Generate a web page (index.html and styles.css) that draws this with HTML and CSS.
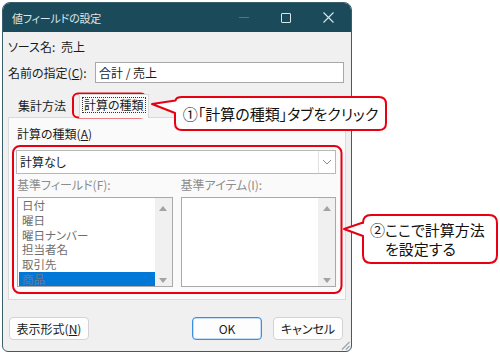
FILE: index.html
```html
<!DOCTYPE html>
<html lang="ja">
<head>
<meta charset="utf-8">
<link rel="stylesheet" href="styles.css">
</head>
<body>
<div class="stage">
  <div class="window">
    <div class="titlebar">
      <span class="title">値フィールドの設定</span>
      <span class="tb-btn tb-min"></span>
      <span class="tb-btn tb-max"><span class="maxbox"></span></span>
      <span class="tb-btn tb-close">
        <svg width="11" height="11" viewBox="0 0 11 11"><path d="M0.5 0.5L10.5 10.5M10.5 0.5L0.5 10.5" stroke="#dbe6e9" stroke-width="1.1" fill="none"/></svg>
      </span>
    </div>
    <div class="content">
      <div class="row source"><span class="srclabel">ソース名:</span>売上</div>
      <div class="row namerow">
        <span class="label">名前の指定(<u>C</u>):</span>
        <div class="input">合計 / 売上</div>
      </div>
      <div class="tabs">
        <div class="tab">集計方法</div>
        <div class="tab active"><span class="focus">計算の種類</span></div>
      </div>
      <div class="panel">
        <div class="plabel">計算の種類(<u>A</u>)</div>
        <div class="select">
          <span class="sel-text">計算なし</span>
          <span class="sel-arrow">
            <svg width="10" height="6" viewBox="0 0 10 6"><path d="M1 1L5 5L9 1" stroke="#8a8a8a" stroke-width="1" fill="none"/></svg>
          </span>
        </div>
        <div class="lists">
          <div class="col">
            <div class="plabel dis">基準フィールド(F):</div>
            <div class="listbox">
              <div class="items">
                <div class="item">日付</div>
                <div class="item">曜日</div>
                <div class="item">曜日ナンバー</div>
                <div class="item">担当者名</div>
                <div class="item">取引先</div>
                <div class="item selected">商品</div>
              </div>
              <div class="scroll"><span class="up"></span><span class="down"></span></div>
            </div>
          </div>
          <div class="col">
            <div class="plabel dis">基準アイテム(I):</div>
            <div class="listbox">
              <div class="items"></div>
              <div class="scroll"><span class="up"></span><span class="down"></span></div>
            </div>
          </div>
        </div>
      </div>
      <div class="buttons">
        <div class="btn wide">表示形式(<u>N</u>)</div>
        <div class="spacer"></div>
        <div class="btn default">OK</div>
        <div class="btn">キャンセル</div>
      </div>
    </div>
    <svg class="grip" width="9" height="9" viewBox="0 0 9 9"><path d="M8.5 1L1 8.5M8.5 5L5 8.5" stroke="#9aa4a8" stroke-width="1.2" fill="none"/></svg>
  </div>

  <svg class="annot" width="500" height="356" viewBox="0 0 500 356">
    <rect x="73" y="93.5" width="73" height="24" rx="5" ry="5" fill="none" stroke="#e60012" stroke-width="2"/>
    <rect x="13" y="146" width="328.5" height="147" rx="7" ry="7" fill="none" stroke="#e60012" stroke-width="2"/>
    <path d="M182 97 H379 Q386 97 386 104 V123 Q386 130 379 130 H182 Q175 130 175 123 V113 L152 104 L175.5 100.5 Q176 97 182 97 Z" fill="#fff" stroke="#e60012" stroke-width="2" stroke-linejoin="round"/>
    <path d="M371 215 H489 Q497 215 497 223 V255 Q497 263 489 263 H371 Q363 263 363 255 V236 L344 229 L363 222.5 V223 Q363 215 371 215 Z" fill="#fff" stroke="#e60012" stroke-width="2" stroke-linejoin="round"/>
  </svg>
  <div class="callout c1">①「計算の種類」タブをクリック</div>
  <div class="callout c2"><span class="l1">②ここで計算方法</span><span class="l2">を設定する</span></div>
</div>
</body>
</html>
```

FILE: styles.css
```css
* { box-sizing: border-box; }
html, body { margin: 0; padding: 0; background: #fff; }
body {
  font-family: "Noto Sans CJK JP", "Noto Sans", sans-serif;
  font-feature-settings: "palt";
  font-size: 12px;
  color: #1a1a1a;
}
u { text-decoration-thickness: 1px; text-underline-offset: 1px; }
.stage { position: relative; width: 500px; height: 356px; overflow: hidden; }

.window {
  position: relative;
  margin: 2px 0 0 2px;
  width: 350px;
  height: 350px;
  border: 1px solid #3a5f6b;
  border-radius: 8px 8px 6px 6px;
  background: #f0f0f0;
  overflow: hidden;
  display: flex;
  flex-direction: column;
}
.titlebar {
  height: 29px;
  flex: none;
  background: #1b4b5b;
  display: flex;
  align-items: center;
  color: #dde6e9;
}
.title { font-size: 11px; padding-left: 9px; flex: 1; letter-spacing: -0.2px; }
.tb-btn { width: 42px; height: 29px; display: flex; align-items: center; justify-content: center; }
.tb-min::before { content: ""; width: 10px; height: 1px; background: #4f7784; }
.maxbox { width: 10px; height: 10px; border: 1px solid #dbe6e9; border-radius: 1px; }
.tb-close { margin-right: 2px; }

.content { padding: 0 5px; display: flex; flex-direction: column; flex: 1; }
.row { line-height: 18px; }
.source { margin-top: 6px; display: flex; }
.srclabel { width: 53px; }
.namerow { margin-top: 6px; display: flex; align-items: center; }
.label { width: 87px; flex: none; }
.input {
  width: 249px; height: 21px;
  border: 1px solid #a8a8a8;
  background: #fff;
  line-height: 19px;
  padding-left: 3px;
}

.tabs { margin-top: 11px; display: flex; align-items: flex-end; padding-left: 4px; height: 23px; position: relative; z-index: 1; }
.tab { height: 21px; line-height: 20px; padding: 0 7px 0 6px; color: #1a1a1a; }
.tab.active {
  height: 24px; margin-left: 6px; margin-bottom: -1px;
  padding: 2px 2px 0;
  background: #fafafa;
  border: 1px solid #d9d9d9;
  border-bottom: none;
}
.focus { display: block; border: 1px dotted #333; line-height: 14px; padding: 0 1px; }

.panel {
  height: 183px;
  flex: none;
  background: #fafafa;
  border: 1px solid #dadada;
  padding: 7px 9px 0 7px;
}
.plabel { line-height: 18px; padding-left: 1px; }
.plabel.dis { color: #8c8c8c; }
.select {
  margin-top: 7px;
  height: 24px;
  background: #fff;
  border: 1px solid #b8b8b8;
  display: flex;
}
.sel-text { flex: 1; line-height: 22px; padding-left: 3px; }
.sel-arrow { width: 17px; border-left: 1px solid #e2e2e2; display: flex; align-items: center; justify-content: center; }

.lists { display: flex; gap: 8px; margin-top: 2px; padding-left: 1px; }
.col { width: 156px; }
.col .plabel { padding-left: 0; }
.listbox {
  margin-top: 3px;
  height: 90px;
  border: 1px solid #a9a9a9;
  background: #fff;
  display: flex;
  overflow: hidden;
}
.items { flex: 1; padding: 0 0 0 1px; }
.item { height: 14.8px; line-height: 14.8px; font-size: 11.5px; color: #6e6e6e; padding-left: 3px; white-space: nowrap; overflow: hidden; }
.item.selected { background: #0078d7; color: #6c7a8a; }
.scroll { width: 17px; background: #f0f0f0; display: flex; flex-direction: column; justify-content: space-between; align-items: center; padding: 8px 0 3px; }
.up, .down { width: 0; height: 0; border-left: 4px solid transparent; border-right: 4px solid transparent; }
.up { border-bottom: 5px solid #a3a3a3; }
.down { border-top: 5px solid #a3a3a3; }

.buttons { margin-top: 17px; display: flex; gap: 11px; padding-left: 1px; padding-right: 3px; }
.spacer { flex: 1; }
.btn {
  width: 70px; height: 23px;
  background: #fdfdfd;
  border: 1px solid #d3d3d3;
  border-radius: 4px;
  text-align: center;
  line-height: 21px;
}
.btn.wide { width: 80px; }
.btn.default { border-color: #3a8ee6; box-shadow: inset 0 0 0 0.5px #8cc0f2; }

.grip { position: absolute; right: 1px; bottom: 1px; }

.annot { position: absolute; left: 0; top: 0; }
.callout { position: absolute; color: #111; font-size: 15px; }
.c1 { left: 175px; top: 97px; width: 211px; height: 33px; display: flex; align-items: center; justify-content: center; line-height: 20px; }
.c2 { left: 363px; top: 215px; width: 134px; height: 48px; padding: 5px 0 0 7px; line-height: 19px; }
.c2 span { display: block; white-space: nowrap; }
.c2 .l2 { padding-left: 15px; }
```
